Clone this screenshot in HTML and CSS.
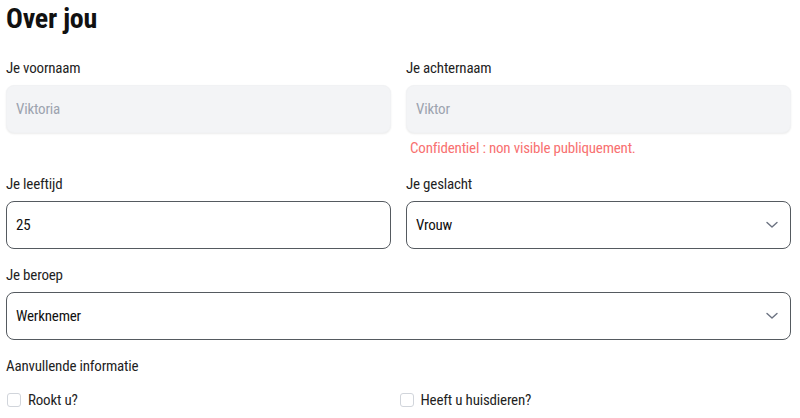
FILE: index.html
```html
<!DOCTYPE html>
<html lang="nl">
<head>
<meta charset="utf-8">
<title>Over jou</title>
<link rel="stylesheet" href="styles.css">
</head>
<body>
<main class="page">
  <h1 class="title">Over jou</h1>

  <div class="grid">
    <div class="field">
      <label class="label" for="fn">Je voornaam</label>
      <input class="input input-muted" id="fn" type="text" placeholder="Viktoria">
    </div>
    <div class="field">
      <label class="label" for="ln">Je achternaam</label>
      <input class="input input-muted" id="ln" type="text" placeholder="Viktor">
      <p class="hint">Confidentiel : non visible publiquement.</p>
    </div>

    <div class="field">
      <label class="label" for="age">Je leeftijd</label>
      <input class="input input-bordered" id="age" type="text" value="25">
    </div>
    <div class="field">
      <label class="label" for="sex">Je geslacht</label>
      <div class="select-wrap">
        <select class="input input-bordered select" id="sex">
          <option>Vrouw</option>
          <option>Man</option>
        </select>
        <svg class="chevron" width="12" height="8" viewBox="0 0 12 8" aria-hidden="true"><path d="M1 1.5 L6 6 L11 1.5" fill="none" stroke="#6b7280" stroke-width="1.4" stroke-linecap="round" stroke-linejoin="round"/></svg>
      </div>
    </div>

    <div class="field span-2">
      <label class="label" for="job">Je beroep</label>
      <div class="select-wrap">
        <select class="input input-bordered select" id="job">
          <option>Werknemer</option>
          <option>Zelfstandige</option>
        </select>
        <svg class="chevron" width="12" height="8" viewBox="0 0 12 8" aria-hidden="true"><path d="M1 1.5 L6 6 L11 1.5" fill="none" stroke="#6b7280" stroke-width="1.4" stroke-linecap="round" stroke-linejoin="round"/></svg>
      </div>
    </div>
  </div>

  <div class="extra">
    <div class="label">Aanvullende informatie</div>
    <div class="checks">
      <label class="check"><input type="checkbox" class="box"><span>Rookt u?</span></label>
      <label class="check"><input type="checkbox" class="box"><span>Heeft u huisdieren?</span></label>
    </div>
  </div>
</main>
</body>
</html>
```

FILE: styles.css
```css
* { box-sizing: border-box; }

html, body {
  margin: 0;
  padding: 0;
  background: #ffffff;
}

body {
  font-family: "Roboto Condensed", Roboto, "Liberation Sans Narrow", sans-serif;
  font-stretch: 75%;
  color: #1f1f1f;
  font-size: 15px;
  letter-spacing: -0.2px;
}

.page {
  width: 785px;
  margin-left: 6px;
  padding-top: 1px;
}

.title {
  margin: 0 0 19px 0;
  font-size: 28px;
  line-height: 36px;
  font-weight: 700;
  letter-spacing: -0.25px;
  color: #111;
}

.grid {
  display: grid;
  grid-template-columns: 1fr 1fr;
  column-gap: 15px;
  row-gap: 14px;
}

.span-2 { grid-column: 1 / span 2; }

.field {
  display: flex;
  flex-direction: column;
}

.label {
  font-size: 15px;
  line-height: 24px;
  color: #1f1f1f;
  margin-bottom: 5px;
}

.input {
  width: 100%;
  height: 48px;
  padding: 0 9px;
  font-family: inherit;
  font-stretch: inherit;
  font-size: 15px;
  letter-spacing: -0.2px;
  color: #111;
  border-radius: 8px;
  outline: none;
  margin: 0;
}

.input-muted {
  background: #f3f4f6;
  border: 1px solid #f1f2f4;
  box-shadow: 0 1px 2px rgba(0, 0, 0, 0.08);
}

.input-muted::placeholder { color: #9ca3af; }

.input-bordered {
  background: #ffffff;
  border: 1px solid #555a60;
}

.select {
  appearance: none;
  -webkit-appearance: none;
  padding-right: 36px;
}

.select-wrap { position: relative; }

.chevron {
  position: absolute;
  right: 13px;
  top: 20px;
  pointer-events: none;
}

.hint {
  margin: 5px 0 0 4px;
  font-size: 15px;
  line-height: 20px;
  color: #f87171;
}

.extra {
  margin-top: 14px;
}

.extra .label { margin-bottom: 12px; }

.checks {
  display: grid;
  grid-template-columns: 1fr 1fr;
}

.check {
  display: flex;
  align-items: center;
  gap: 7px;
  font-size: 15px;
  line-height: 20px;
  color: #1f1f1f;
}

.box {
  appearance: none;
  -webkit-appearance: none;
  width: 14px;
  height: 14px;
  margin: 0 0 0 1px;
  border: 1px solid #d1d5db;
  border-radius: 3px;
  background: #fff;
}
```
